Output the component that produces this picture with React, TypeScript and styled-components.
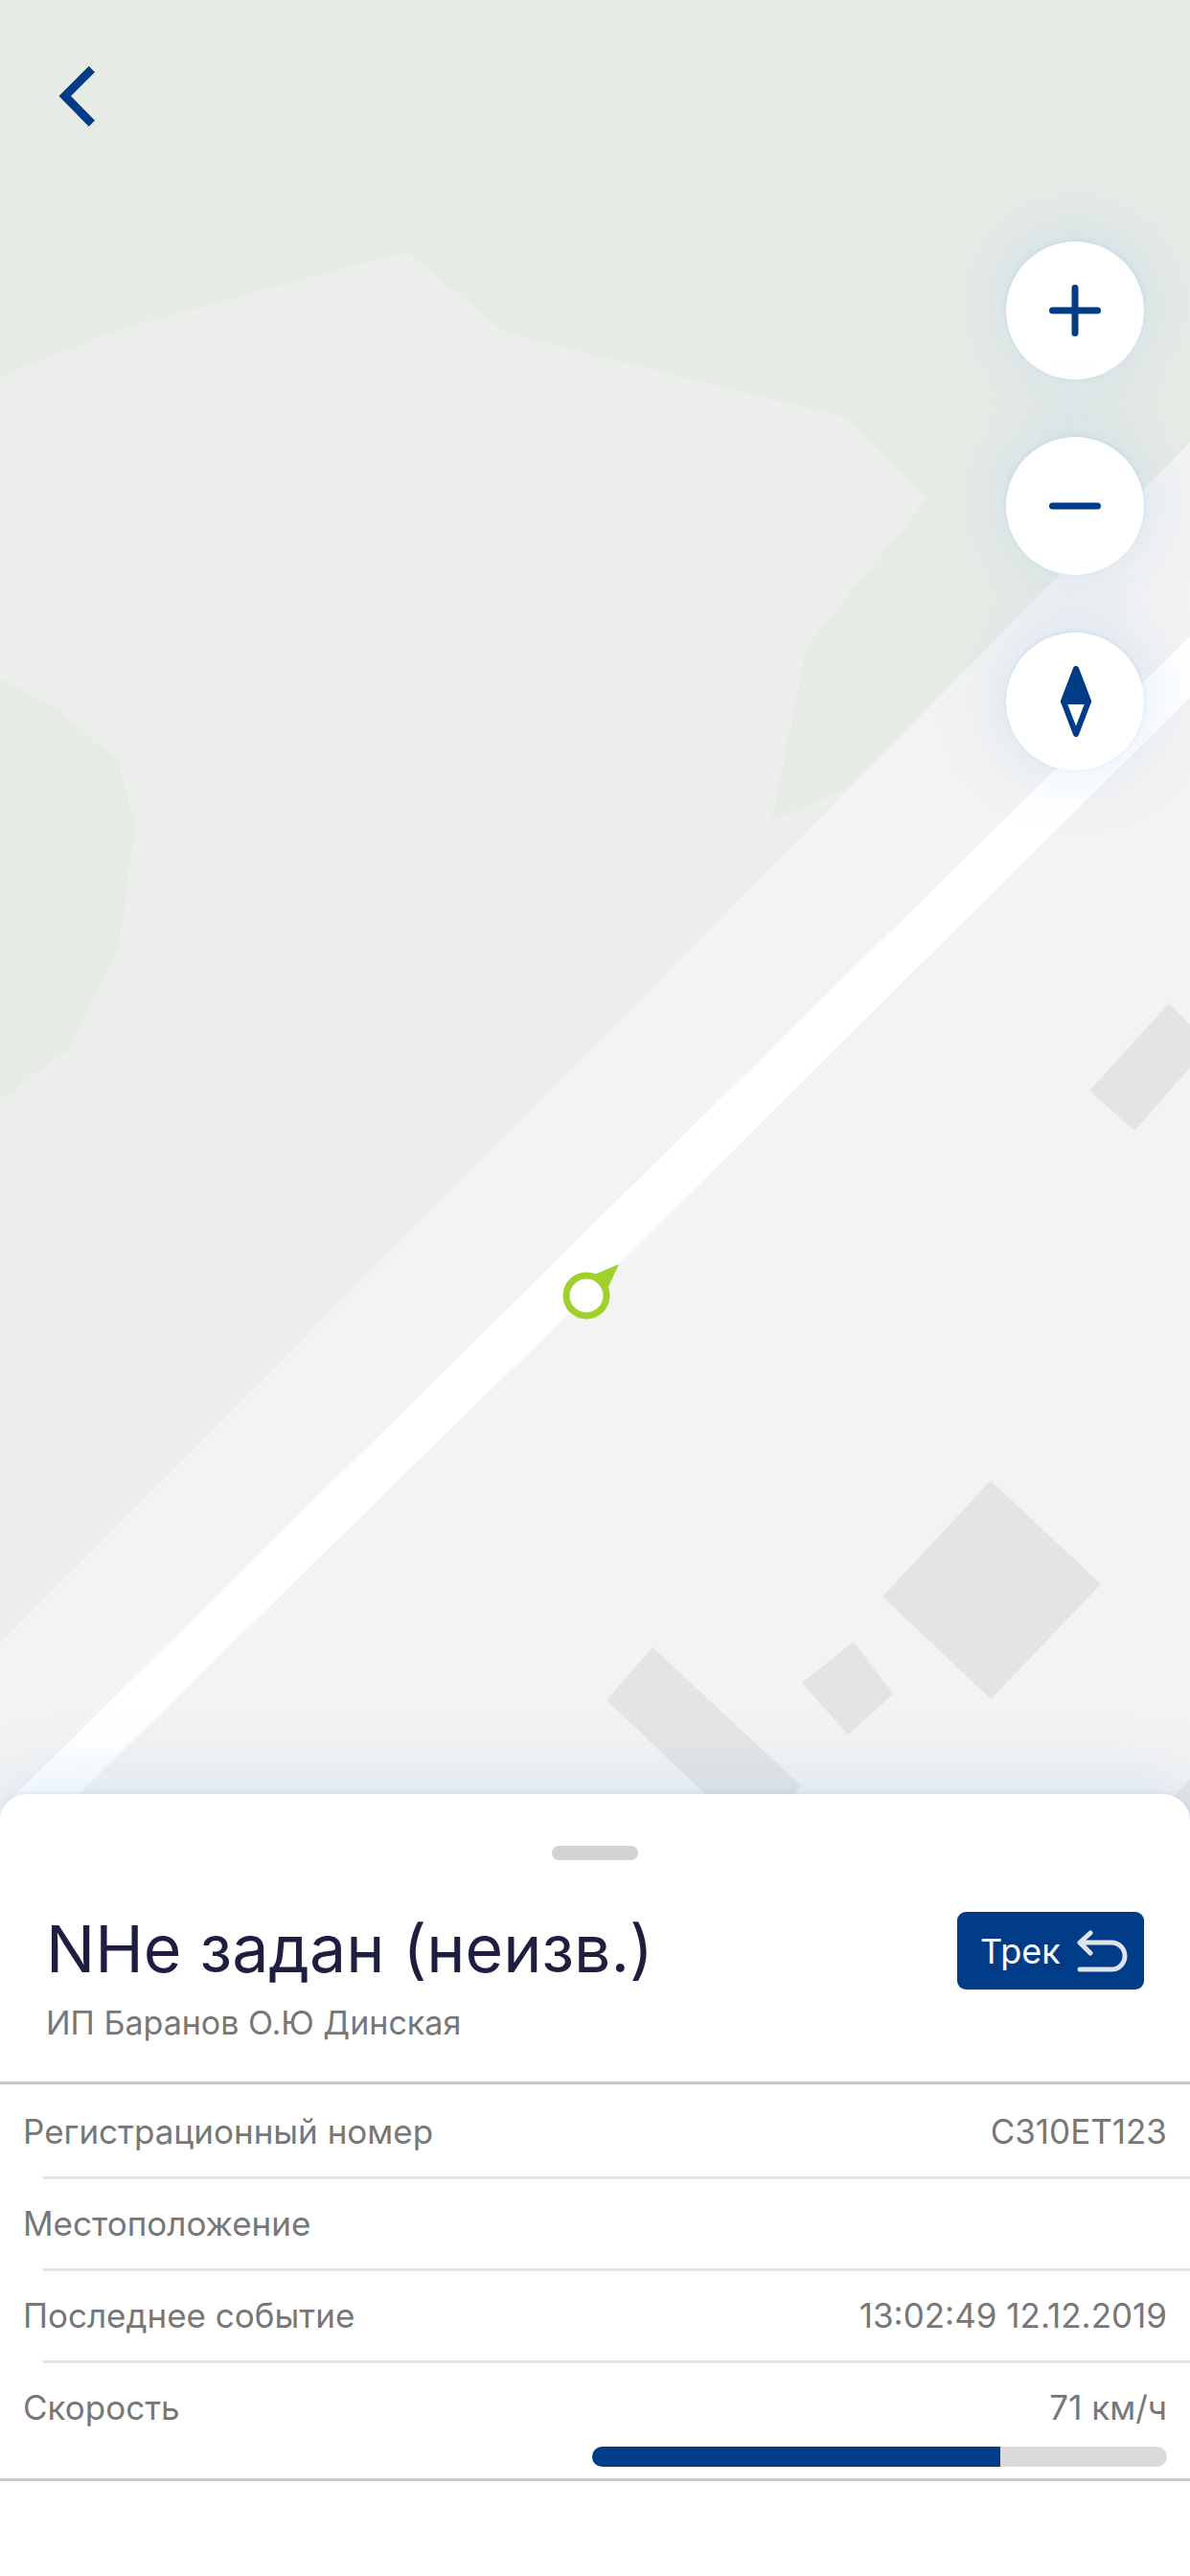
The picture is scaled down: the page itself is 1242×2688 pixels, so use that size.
import React from "react";
import styled, { createGlobalStyle } from "styled-components";

const color = {
  brand: "#003c88",
  title: "#1e1e40",
  muted: "#777777",
  separator: "#c8c7cc",
  hairline: "#e2e2e4",
  marker: "#a0d02c",
};

const glow = "0 -1px 4px rgba(130, 180, 225, 0.25), 0 -6px 76px rgba(170, 205, 240, 0.45)";

const GlobalStyle = createGlobalStyle`
  *, *::before, *::after { box-sizing: border-box; }
  body {
    margin: 0;
    background: #ffffff;
    font-family: Inter, "Noto Sans", sans-serif;
  }
  h1, p, ul { margin: 0; padding: 0; }
  button { font-family: inherit; cursor: pointer; }
`;

const Screen = styled.main`
  display: flex;
  flex-direction: column;
  min-height: 100vh;
`;

const MapArea = styled.section`
  position: relative;
  flex: 1;
  display: flex;
  justify-content: space-between;
  align-items: flex-start;
  min-height: 900px;
  padding: 60px 48px;
  background: #f3f3f3;
  overflow: hidden;
`;

const MapDrawing = styled.svg`
  position: absolute;
  inset: 0;
  width: 100%;
  height: 100%;
`;

const BackButton = styled.button`
  position: relative;
  display: flex;
  padding: 0;
  border: 0;
  background: none;
`;

const MapControls = styled.div`
  position: relative;
  display: flex;
  flex-direction: column;
  gap: 60px;
  padding-top: 192px;
`;

const RoundButton = styled.button`
  display: flex;
  align-items: center;
  justify-content: center;
  width: 144px;
  height: 144px;
  padding: 0;
  border: 0;
  border-radius: 50%;
  background: #ffffff;
  box-shadow: ${glow};
`;

const Sheet = styled.section`
  position: relative;
  margin-top: -28px;
  padding: 54px 0 99px;
  border-radius: 28px 28px 0 0;
  background: #ffffff;
  box-shadow: ${glow};
`;

const Handle = styled.div`
  width: 90px;
  height: 15px;
  margin: 0 auto 54px;
  border-radius: 8px;
  background: #d2d2d2;
`;

const SheetHeader = styled.header`
  padding: 0 48px 41px;
`;

const TitleRow = styled.div`
  display: flex;
  justify-content: space-between;
  align-items: flex-start;
  margin-bottom: 15px;
`;

const Title = styled.h1`
  color: ${color.title};
  font-size: 68px;
  font-weight: 400;
  line-height: 76px;
`;

const Subtitle = styled.p`
  color: ${color.muted};
  font-size: 34px;
  line-height: 40px;
`;

const TrackButton = styled.button`
  display: flex;
  align-items: center;
  justify-content: space-between;
  width: 195px;
  height: 81px;
  padding: 0 16px 0 24px;
  border: 0;
  border-radius: 9px;
  background: ${color.brand};
  color: #ffffff;
  font-size: 36px;
`;

const Details = styled.ul`
  padding-top: 3px;
  border: solid ${color.separator};
  border-width: 3px 0;
  list-style: none;
`;

const DetailItem = styled.li`
  &:not(:last-child)::after {
    content: "";
    display: block;
    height: 3px;
    margin-left: 45px;
    background: ${color.hairline};
  }
`;

const DetailRow = styled.div<{ $withBar?: boolean }>`
  display: flex;
  justify-content: space-between;
  padding: ${(p) => (p.$withBar ? "25px 24px 19px" : "25px 24px")};
  color: ${color.muted};
  font-size: 35px;
  line-height: 43px;
`;

const SpeedBar = styled.progress`
  display: block;
  width: 600px;
  max-width: calc(100% - 48px);
  height: 21px;
  margin: 0 24px 12px auto;
  border: 0;
  border-radius: 11px;
  overflow: hidden;
  appearance: none;

  &::-webkit-progress-bar { background: #dadada; }
  &::-webkit-progress-value { background: ${color.brand}; }
`;

const details = [
  { label: "Регистрационный номер", value: "С310ЕТ123" },
  { label: "Местоположение", value: "" },
  { label: "Последнее событие", value: "13:02:49 12.12.2019" },
  { label: "Скорость", value: "71 км/ч", speed: 71 },
];

const buildings = [
  "1220,1047 1260,1087 1242,1114 1184,1180 1137,1138",
  "1034,1545 1149,1653 1034,1773 921,1666",
  "891,1713 932,1768 885,1810 837,1756",
  "681,1719 836,1863 806,1900 765,1900 633,1774",
  "1242,1857 1242,1900 1200,1900",
];

function CityMap() {
  return (
    <MapDrawing viewBox="0 0 1242 1900" preserveAspectRatio="xMidYMid slice" aria-hidden="true">
      <rect width="1242" height="1900" fill="#f3f3f3" />
      <polygon points="0,0 1242,0 1242,461 600,1112 0,1714" fill="#e6ebe5" />
      <polygon
        points="0,393 119,345 424,262 527,347 885,436 968,520 842,675 806,856 887,822 600,1112 0,1714 0,1147 70,1096 124,986 141,862 124,796 63,742 0,708"
        fill="#ebeeea"
      />
      <polygon points="1242,664 901,1000 600,1296 90,1800 -12,1900 54,1900 155,1800 646,1319 967,1000 1242,728" fill="#ffffff" />
      {buildings.map((points) => (
        <polygon key={points} points={points} fill="#e4e4e4" />
      ))}
      <path d="M646 1319 L618 1331 L634 1345 Z" fill={color.marker} />
      <circle cx="612" cy="1352" r="21" fill="#ffffff" stroke={color.marker} strokeWidth="7" />
    </MapDrawing>
  );
}

export default function App() {
  return (
    <>
      <GlobalStyle />
      <Screen>
        <MapArea aria-label="Карта">
          <CityMap />
          <BackButton aria-label="Назад">
            <svg width="64" height="80" viewBox="0 0 64 80">
              <path d="M13.5 40.3 L44.7 9 L51 15.3 L26 40.3 L51 65.7 L44.7 72 Z" fill={color.brand} />
            </svg>
          </BackButton>
          <MapControls>
            <RoundButton aria-label="Приблизить">
              <svg width="54" height="54" viewBox="0 0 54 54" stroke={color.brand} strokeWidth="7" strokeLinecap="round">
                <path d="M27 3.5 V50.5 M3.5 27 H50.5" />
              </svg>
            </RoundButton>
            <RoundButton aria-label="Отдалить">
              <svg width="54" height="54" viewBox="0 0 54 54" stroke={color.brand} strokeWidth="7" strokeLinecap="round">
                <path d="M3.5 27 H50.5" />
              </svg>
            </RoundButton>
            <RoundButton aria-label="Компас">
              <svg width="34" height="76" viewBox="0 0 34 76" stroke={color.brand} strokeWidth="6" strokeLinejoin="round">
                <path d="M18 4 L31 38 L18 72 L5 38 Z" fill="#ffffff" />
                <path d="M18 4 L31 38 H5 Z" fill={color.brand} />
              </svg>
            </RoundButton>
          </MapControls>
        </MapArea>
        <Sheet>
          <Handle />
          <SheetHeader>
            <TitleRow>
              <Title>NНе задан (неизв.)</Title>
              <TrackButton>
                Трек
                <svg width="54" height="44" viewBox="0 0 54 44" fill="none" stroke="#dfe4ee" strokeWidth="5" strokeLinecap="round" strokeLinejoin="round">
                  <path d="M14 3 L3 13 L14 24 M3 13 H36 A14 14 0 0 1 36 41 H3" />
                </svg>
              </TrackButton>
            </TitleRow>
            <Subtitle>ИП Баранов О.Ю Динская</Subtitle>
          </SheetHeader>
          <Details>
            {details.map((item) => (
              <DetailItem key={item.label}>
                <DetailRow $withBar={item.speed !== undefined}>
                  <span>{item.label}</span>
                  <span>{item.value}</span>
                </DetailRow>
                {item.speed !== undefined && <SpeedBar value={item.speed} max={100} aria-label={item.label} />}
              </DetailItem>
            ))}
          </Details>
        </Sheet>
      </Screen>
    </>
  );
}
